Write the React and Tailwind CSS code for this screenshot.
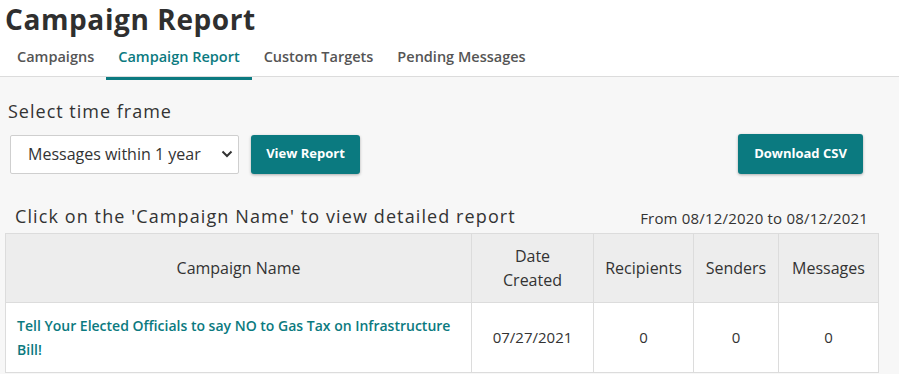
import React from "react";

const teal = "bg-[#0b7a80]";

export default function App() {
  return (
    <div className="w-[899px] h-[374px] overflow-hidden bg-[#f7f7f7] text-[#333] font-['Open_Sans',sans-serif]">
      <div className="bg-white border-b border-[#dcdcdc] h-[77px]">
        <h1 className="text-[28px] leading-[34px] font-bold tracking-[0.6px] text-[#2f2f2f] pl-[5px] pt-[2px]">
          Campaign Report
        </h1>
        <nav className="flex pl-[5px] mt-[4px] text-[14.5px] font-semibold text-[#555]">
          <span className="px-[12px] pt-[6px] pb-[8px] h-[40px] leading-[22px]">Campaigns</span>
          <span className="px-[12px] pt-[6px] pb-[8px] h-[40px] leading-[22px] border-b-[3px] border-[#0b7a80] text-[#0b7a80]">Campaign Report</span>
          <span className="px-[12px] pt-[6px] pb-[8px] h-[40px] leading-[22px]">Custom Targets</span>
          <span className="px-[12px] pt-[6px] pb-[8px] h-[40px] leading-[22px]">Pending Messages</span>
        </nav>
      </div>

      <div className="px-[8px] pt-[22px]">
        <div className="text-[18px] leading-[24px] tracking-[1px] text-[#333]">Select time frame</div>
        <div className="flex items-center mt-[11px] pl-[2px]">
          <div className="w-[229px] h-[39px] bg-white border border-[#cfcfcf] rounded-[2px] flex items-center justify-between pl-[17px] pr-[5px] text-[16px] text-[#333]">
            <span>Messages within 1 year</span>
            <svg width="12" height="8" viewBox="0 0 12 8" fill="none">
              <path d="M1.5 1.5 L6 6 L10.5 1.5" stroke="#333" strokeWidth="2" />
            </svg>
          </div>
          <button className={`${teal} ml-[12px] w-[109px] h-[39px] rounded-[3px] text-white text-[13px] font-bold shadow-[0_1px_3px_rgba(0,0,0,0.3)]`}>
            View Report
          </button>
          <div className="flex-1" />
          <button className={`${teal} mr-[28px] w-[125px] h-[40px] rounded-[3px] text-white text-[13px] font-bold shadow-[0_1px_3px_rgba(0,0,0,0.3)]`}>
            Download CSV
          </button>
        </div>

        <div className="flex items-end justify-between mt-[30px] pl-[7px] pr-[23px]">
          <span className="text-[18px] leading-[24px] tracking-[1.1px] text-[#333]">
            Click on the 'Campaign Name' to view detailed report
          </span>
          <span className="text-[15px] leading-[20px] tracking-[0.2px] text-[#333]">From 08/12/2020 to 08/12/2021</span>
        </div>
      </div>

      <table className="ml-[5px] mt-[5px] w-[874px] border-collapse text-[16px] text-[#333]">
        <thead>
          <tr className="bg-[#ededed] h-[69px]">
            <th className="w-[466px] border border-[#dcdcdc] font-normal">Campaign Name</th>
            <th className="w-[122px] border border-[#dcdcdc] font-normal leading-[24px]">Date<br />Created</th>
            <th className="w-[100px] border border-[#dcdcdc] font-normal">Recipients</th>
            <th className="w-[85px] border border-[#dcdcdc] font-normal">Senders</th>
            <th className="border border-[#dcdcdc] font-normal">Messages</th>
          </tr>
        </thead>
        <tbody>
          <tr className="bg-white h-[70px]">
            <td className="border border-[#dcdcdc] px-[11px] text-[14px] leading-[24px] font-semibold text-[#0b7a80]">
              Tell Your Elected Officials to say NO to Gas Tax on Infrastructure Bill!
            </td>
            <td className="border border-[#dcdcdc] text-center text-[15px]">07/27/2021</td>
            <td className="border border-[#dcdcdc] text-center text-[15px]">0</td>
            <td className="border border-[#dcdcdc] text-center text-[15px]">0</td>
            <td className="border border-[#dcdcdc] text-center text-[15px]">0</td>
          </tr>
        </tbody>
      </table>
    </div>
  );
}
